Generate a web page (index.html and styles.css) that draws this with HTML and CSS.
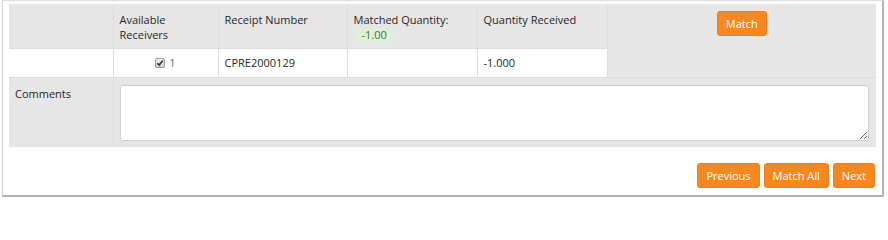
FILE: index.html
```html
<!DOCTYPE html>
<html>
<head>
<meta charset="utf-8">
<link rel="stylesheet" href="styles.css">
</head>
<body>
<div class="frame">
  <table class="grid">
    <colgroup>
      <col class="c1"><col class="c2"><col class="c3"><col class="c4"><col class="c5"><col class="c6">
    </colgroup>
    <tr class="head">
      <th></th>
      <th>Available<br>Receivers</th>
      <th>Receipt Number</th>
      <th>Matched Quantity:<br><span class="badge">-1.00</span></th>
      <th>Quantity Received</th>
      <th rowspan="2" class="match-cell"><button class="btn">Match</button></th>
    </tr>
    <tr class="data">
      <td></td>
      <td class="center"><span class="chk"><svg width="10" height="10" viewBox="0 0 10 10"><defs><linearGradient id="g" x1="0" y1="0" x2="0" y2="1"><stop offset="0" stop-color="#f4f4f4"/><stop offset="1" stop-color="#cfcfcf"/></linearGradient></defs><rect x="0.5" y="0.5" width="9" height="9" rx="1.5" fill="url(#g)" stroke="#9a9a9a"/><path d="M2.3 5.2 L4.2 7.1 L7.8 2.6" fill="none" stroke="#333" stroke-width="1.6"/></svg></span><a class="link">1</a></td>
      <td>CPRE2000129</td>
      <td></td>
      <td>-1.000</td>
    </tr>
    <tr class="comments">
      <th>Comments</th>
      <td colspan="5"><textarea class="area"></textarea></td>
    </tr>
  </table>
  <div class="actions">
    <button class="btn">Previous</button>
    <button class="btn">Match All</button>
    <button class="btn">Next</button>
  </div>
</div>
</body>
</html>
```
FILE: styles.css
```css
html, body {
  margin: 0;
  padding: 0;
  background: #fff;
}
body {
  font-family: "Open Sans", "Liberation Sans", sans-serif;
  font-size: 11px;
  color: #262626;
}
.frame {
  margin-left: 2px;
  border-left: 1px solid #d2d2d2;
  border-top: 1px solid #dcdcdc;
  border-right: 2px solid #b3b3b3;
  border-bottom: 2px solid #b3b3b3;
  padding: 3px 6px 7px 6px;
  box-sizing: border-box;
  width: 882px;
  height: 197px;
  display: flex;
  flex-direction: column;
}
.grid {
  width: 867px;
  table-layout: fixed;
  border-collapse: collapse;
  background: #e6e6e6;
}
.c1 { width: 104px; }
.c2 { width: 105px; }
.c3 { width: 129px; }
.c4 { width: 130px; }
.c5 { width: 130px; }
.c6 { width: 269px; }
.grid th, .grid td {
  border: 1px solid #dcdcdc;
  padding: 0 6px;
  font-weight: normal;
  text-align: left;
  line-height: 15px;
}
.grid tr:first-child th { border-top: none; }
.grid tr th:first-child, .grid tr td:first-child { border-left: none; }
.grid tr:last-child th, .grid tr:last-child td { border-bottom: none; }
.grid .match-cell { border-right: none; }
.grid tr:last-child td { border-right: none; }
.head th {
  height: 44px;
  box-sizing: border-box;
    vertical-align: top;
  padding-top: 8px;
  background: #e6e6e6;
}
.head .match-cell {
  text-align: center;
  padding-top: 7px;
}
.badge {
  display: inline-block;
  background: #dff0d8;
  color: #3c763d;
  padding: 0 6px;
  margin-left: 2px;
  margin-top: 1px;
  line-height: 14px;
}
.data td {
  background: #fff;
  height: 29px;
  box-sizing: border-box;
  vertical-align: middle;
}
.center { text-align: center !important; }
.chk {
  display: inline-block;
  vertical-align: -1px;
  margin-right: 4px;
}
.chk svg { display: block; }
.link { color: #3a6f9f; }
.comments th, .comments td {
  height: 70px;
  box-sizing: border-box;
  vertical-align: top;
  background: #e6e6e6;
}
.comments th { padding-top: 8px; }
.comments td { padding: 7px 6px 0 6px; }
.area {
  display: block;
  width: 749px;
  height: 56px;
  box-sizing: border-box;
  border: 1px solid #cfcfcf;
  border-radius: 3px;
  background: #fff;
  margin: 0;
  resize: vertical;
}
.btn {
  font-family: "Open Sans", "Liberation Sans", sans-serif;
  font-size: 11px;
  color: #fff;
  background: #f7871f;
  border: 1px solid #ef7e18;
  border-radius: 3px;
  height: 25px;
  padding: 0 8px;
  margin: 0;
  cursor: pointer;
}
.actions {
  display: flex;
  justify-content: flex-end;
  gap: 4px;
  margin-top: 16px;
  width: 867px;
  padding-right: 1px;
  box-sizing: border-box;
}
```
